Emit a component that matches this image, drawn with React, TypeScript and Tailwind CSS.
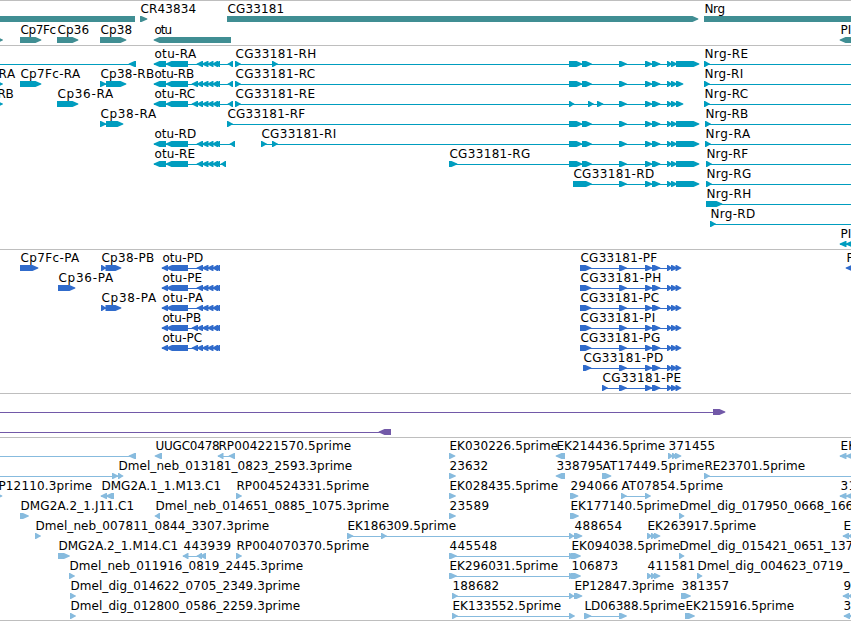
type Span = [number, number];
type Dir = 'r' | 'l' | 'n';
// label, label start, label end, strand, exons
type Feature = [string, number, number, Dir, Span[]];

const tail: Span[] = [[619, 626.5], [645, 652], [652, 660], [667, 672], [671, 677]];
const head: Span[] = [[569, 582], [582, 591.5]];
const long: Span[] = [...head, ...tail, [676, 699]];
const short: Span[] = [...head, ...tail, [676, 683]];
const otuEnd: Span[] = [[197, 203], [202, 208.5], [207.5, 213.5], [212.5, 218], [215.5, 220]];
const otuExtra: Span[] = [[192, 198], ...otuEnd];
const otuR: Span[] = [[154, 166], [166, 188]];
const otuP: Span[] = [[162, 168], [166.5, 188]];
const pTail: Span[] = [...tail, [675.5, 681]];
const pFull: Span[] = [[580, 585], [581, 591], ...pTail];
const off: Span = [858, 866];

const genes: Feature[][] = [
  [
    ['', 0, 0, 'n', [[-5, 135]]],
    ['CR43834', 140, 196, 'r', [[140, 147]]],
    ['CG33181', 227, 284, 'r', [[227, 698]]],
    ['Nrg', 704, 725, 'n', [[704, 860]]],
  ],
  [
    ['', 0, 0, 'r', [[-8, 2.5]]],
    ['Cp7Fc', 20, 56, 'r', [[20, 41]]],
    ['Cp36', 57, 89, 'r', [[57, 78]]],
    ['Cp38', 100, 132, 'r', [[100, 126]]],
    ['otu', 154, 172, 'l', [[154, 231]]],
    ['PI', 840, 851, 'l', [[840, 862]]],
  ],
];

const transcripts: Feature[][] = [
  [
    ['', 0, 0, 'l', [[-20, -10], [129, 136]]],
    ['otu-RA', 154, 196, 'l', [...otuR, ...otuEnd, [228, 233]]],
    ['CG33181-RH', 235, 316, 'r', [[235, 240.5], [272, 277.5], ...long]],
    ['Nrg-RE', 704, 748, 'r', [[704, 709.5], off]],
  ],
  [
    ['RA', -2, 15, 'r', [[-8, 2.5]]],
    ['Cp7Fc-RA', 20, 80, 'r', [[20, 41]]],
    ['Cp38-RB', 100, 154, 'r', [[100, 106], [106, 126]]],
    ['otu-RB', 154, 194, 'l', [...otuR, ...otuExtra, [228, 233]]],
    ['CG33181-RC', 235, 315, 'r', [[235, 240.5], ...short]],
    ['Nrg-RI', 704, 743, 'r', [[704, 709.5], off]],
  ],
  [
    ['RB', -3, 13.5, 'r', [[-8, 2.5]]],
    ['Cp36-RA', 57, 113, 'r', [[57, 78]]],
    ['otu-RC', 154, 195, 'l', [...otuR, ...otuExtra, [228, 233]]],
    ['CG33181-RE', 235, 315, 'r', [[235, 240.5], [569, 574], [588, 593.5], [597, 603], ...tail, [676, 683]]],
    ['Nrg-RC', 704, 748, 'r', [[704, 709.5], off]],
  ],
  [
    ['Cp38-RA', 100, 156, 'r', [[100, 106], [106, 123]]],
    ['CG33181-RF', 227, 305, 'r', [[227, 232.5], ...long]],
    ['Nrg-RB', 705, 748, 'r', [[705, 710.5], off]],
  ],
  [
    ['otu-RD', 154, 196, 'l', [...otuR, ...otuEnd, [230, 235]]],
    ['CG33181-RI', 261, 336, 'r', [[261, 266.5], [272, 277.5], ...long]],
    ['Nrg-RA', 705, 750, 'r', [[705, 710.5], off]],
  ],
  [
    ['otu-RE', 154, 195, 'l', [...otuR, ...otuEnd, [221, 226]]],
    ['CG33181-RG', 449, 530, 'r', [[449, 457], ...long]],
    ['Nrg-RF', 706, 748, 'r', [[706, 711.5], off]],
  ],
  [
    ['CG33181-RD', 573, 654, 'r', [[573, 591.5], ...tail, [676, 699]]],
    ['Nrg-RG', 706, 751, 'r', [[706, 711.5], off]],
  ],
  [['Nrg-RH', 706, 751, 'r', [[706, 722], off]]],
  [['Nrg-RD', 710, 755, 'r', [[710, 715.5], off]]],
  [['PI', 840, 851, 'l', [[840, 846.5], [846, 862]]]],
];

const proteins: Feature[][] = [
  [
    ['Cp7Fc-PA', 20, 79, 'r', [[20, 38]]],
    ['Cp38-PB', 101, 154, 'r', [[101, 106], [105.5, 121]]],
    ['otu-PD', 162, 203, 'l', [...otuP, ...otuEnd]],
    ['CG33181-PF', 580, 657, 'r', pFull],
    ['P', 846, 853, 'l', [[846, 862]]],
  ],
  [
    ['Cp36-PA', 58, 113, 'r', [[58, 75]]],
    ['otu-PE', 162, 202, 'l', [...otuP, ...otuEnd]],
    ['CG33181-PH', 580, 661, 'r', pFull],
  ],
  [
    ['Cp38-PA', 101, 156, 'r', [[101, 106], [105.5, 121]]],
    ['otu-PA', 162, 203, 'l', [...otuP, ...otuEnd]],
    ['CG33181-PC', 580, 659, 'r', pFull],
  ],
  [
    ['otu-PB', 162, 201, 'l', [...otuP, ...otuExtra]],
    ['CG33181-PI', 580, 655, 'r', pFull],
  ],
  [
    ['otu-PC', 162, 202, 'l', [...otuP, ...otuExtra]],
    ['CG33181-PG', 580, 660, 'r', pFull],
  ],
  [['CG33181-PD', 583, 663, 'r', [[583, 591], ...pTail]]],
  [['CG33181-PE', 602, 681, 'r', [[602, 607.5], ...pTail]]],
];

const noncoding: Feature[][] = [
  [['', 0, 0, 'r', [[-20, -10], [713, 725]]]],
  [['', 0, 0, 'l', [[-20, -10], [379, 391]]]],
];

const trio: Span[] = [[647, 652], [651, 656], [654, 660]];

const clones: Feature[][] = [
  [
    ['', 0, 0, 'l', [[-20, -10], [129, 136]]],
    ['UUGC0478', 155, 219.5, 'l', [[155, 162]]],
    ['RP004221570.5prime', 218, 351, 'l', [[218, 223.5], [229, 235]]],
    ['EK030226.5prime', 449, 558, 'r', [[449, 455]]],
    ['EK214436.5prime', 556, 665, 'l', [[556, 565]]],
    ['371455', 668, 715, 'r', [[668, 673], [672, 677], [675, 681]]],
    ['EK', 840, 856, 'l', [[840, 846.5], [846, 862]]],
  ],
  [
    ['', 0, 0, 'r', [[-20, -10], [112, 118], [118, 123]]],
    ['Dmel_neb_013181_0823_2593.3prime', 118, 352, 'r', []],
    ['23632', 449, 488, 'r', [[449, 455.5]]],
    ['338795', 556, 603, 'l', [[556, 565]]],
    ['AT17449.5prime', 602, 704, 'r', [[602, 611]]],
    ['RE23701.5prime', 704, 805, 'r', [[704, 709.5], off]],
  ],
  [
    ['P12110.3prime', -2, 92, 'r', [[-8, 2]]],
    ['DMG2A.1_1.M13.C1', 101, 221, 'l', [[101, 107], [106, 114]]],
    ['RP004524331.5prime', 236, 369, 'r', [[236, 241.5]]],
    ['EK028435.5prime', 449, 558, 'r', [[449, 455.5]]],
    ['294066', 570, 618, 'r', [[570, 578]]],
    ['AT07854.5prime', 621, 723, 'r', [[621, 626.5], [645, 650.5]]],
    ['31', 840, 856, 'l', [[840, 846.5], [846, 862]]],
  ],
  [
    ['DMG2A.2_1.J11.C1', 20, 134, 'r', [[20, 28.5]]],
    ['Dmel_neb_014651_0885_1075.3prime', 155, 389, 'l', [[155, 160]]],
    ['23589', 449, 489, 'r', [[449, 455.5]]],
    ['EK177140.5prime', 570, 679, 'r', [[570, 578.5]]],
    ['Dmel_dig_017950_0668_166', 679, 853, 'r', [[679, 684]]],
  ],
  [
    ['Dmel_neb_007811_0844_3307.3prime', 35, 269, 'r', [[35, 40.5]]],
    ['EK186309.5prime', 347, 456, 'r', [[347, 353], [381, 386.5], [569, 574], [574, 582]]],
    ['488654', 574, 622, 'r', []],
    ['EK263917.5prime', 647, 756, 'r', trio],
    ['E', 843, 851, 'l', [[843, 849], [848, 862]]],
  ],
  [
    ['DMG2A.2_1.M14.C1', 58, 178, 'r', [[58, 69.5]]],
    ['443939', 183, 231, 'l', [[183, 188.5], [197, 202], [200, 206]]],
    ['RP004070370.5prime', 236, 369, 'r', [[236, 241.5]]],
    ['445548', 449, 497, 'r', [[449, 456.5], [569, 575], [571, 580.5]]],
    ['EK094038.5prime', 571, 680, 'r', []],
    ['Dmel_dig_015421_0651_137', 679, 853, 'r', [[679, 684]]],
  ],
  [
    ['Dmel_neb_011916_0819_2445.3prime', 69, 303, 'r', [[69, 74.5]]],
    ['EK296031.5prime', 449, 558, 'r', [[449, 456.5], [569, 575], [571, 580.5]]],
    ['106873', 571, 618, 'r', []],
    ['411581', 647, 695, 'r', trio],
    ['Dmel_dig_004623_0719_', 697, 849, 'r', [[697, 702]]],
  ],
  [
    ['Dmel_dig_014622_0705_2349.3prime', 70, 300, 'r', [[70, 75.5]]],
    ['188682', 452, 499, 'r', [[452, 457.5], [569, 574], [574, 582]]],
    ['EP12847.3prime', 574, 674, 'r', []],
    ['381357', 681, 729, 'r', [[681, 690.5]]],
    ['9', 843, 851, 'l', [[843, 849], [848, 862]]],
  ],
  [
    ['Dmel_dig_012800_0586_2259.3prime', 70, 300, 'r', [[70, 75.5]]],
    ['EK133552.5prime', 452, 561, 'r', [[452, 457.5], [569, 574.5]]],
    ['LD06388.5prime', 584, 685, 'r', [[584, 591], [619, 626.5]]],
    ['EK215916.5prime', 685, 794, 'r', [[685, 694.5]]],
    ['3', 843, 851, 'l', [[844, 850], [849, 862]]],
  ],
];

function exonPoints([a, b]: Span, dir: Dir) {
  if (dir === 'n') return `${a},14 ${b},14 ${b},20 ${a},20`;
  const tip = Math.min(5.5, b - a - 1);
  return dir === 'r'
    ? `${a},14 ${b - tip},14 ${b - 1},16 ${b + 0.3},16.5 ${b + 0.3},17.5 ${b - 1},18 ${b - tip},20 ${a},20`
    : `${b},14 ${a + tip},14 ${a + 1},16 ${a - 0.3},16.5 ${a - 0.3},17.5 ${a + 1},18 ${a + tip},20 ${b},20`;
}

function Row({ items, tall }: { items: Feature[]; tall?: boolean }) {
  return (
    <div className={tall ? 'h-[21px]' : 'h-5'}>
      <svg width="851" height="20" className="block overflow-hidden">
        {items.map(([label, start, end, dir, exons], i) => (
          <g key={i}>
            {exons.length > 1 && (
              <rect x={exons[0][0]} y="17" width={exons[exons.length - 1][1] - exons[0][0] - 1} height="1" />
            )}
            {exons.map((e, j) => (
              <polygon key={j} points={exonPoints(e, dir)} />
            ))}
            {label && (
              <text x={start + 0.4} y="11" textLength={end - start - 0.2} className="fill-black text-[12px]">
                {label}
              </text>
            )}
          </g>
        ))}
      </svg>
    </div>
  );
}

function Track({ rows, color, tall, last }: { rows: Feature[][]; color: string; tall?: boolean; last?: boolean }) {
  return (
    <section
      className={`border-t border-[#bebebe] pt-px ${tall || last ? 'pb-px' : 'pb-0.5'} ${last ? 'border-b' : ''} ${color}`}
    >
      {rows.map((items, i) => (
        <Row key={i} items={items} tall={tall} />
      ))}
    </section>
  );
}

export default function App() {
  return (
    <main className="flex w-[851px] flex-col bg-white font-['DejaVu_Sans',sans-serif]">
      <Track rows={genes} color="fill-[#408e93]" tall />
      <Track rows={transcripts} color="fill-[#009dbf]" />
      <Track rows={proteins} color="fill-[#306bcb]" />
      <Track rows={noncoding} color="fill-[#7259a8]" />
      <Track rows={clones} color="fill-[#87bbde]" last />
    </main>
  );
}
